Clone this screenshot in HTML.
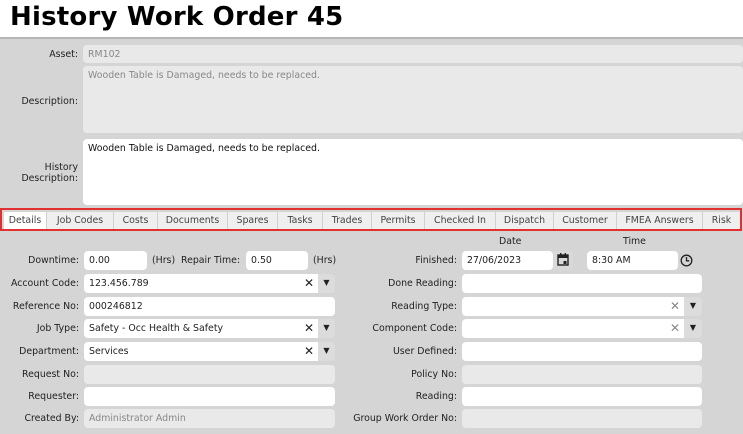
<!DOCTYPE html>
<html><head><meta charset="utf-8"><style>
*{box-sizing:border-box;margin:0;padding:0}
body{width:743px;height:434px;overflow:hidden;background:#d5d5d5;font-family:"DejaVu Sans","Liberation Sans",sans-serif;font-size:9.4px;color:#222;position:relative}
.a{position:absolute}
.hd{left:0;top:0;width:743px;height:39px;background:#fff;border-bottom:2px solid #b5b5b5}
h1{position:absolute;left:10px;top:2px;font-size:26px;font-weight:bold;color:#000;letter-spacing:0.2px}
.l{position:absolute;text-align:right;white-space:nowrap}
.i{position:absolute;height:19px;background:#fff;border-radius:4px;padding:4px 0 0 5px;white-space:nowrap}
.r{background:#e9e9e9;color:#888}
.btn{position:absolute;height:19px;background:#dcdcdc;border-radius:0 4px 4px 0;text-align:center;padding-top:4px;font-size:8px}
.tabs{left:0;top:208px;width:742px;height:23px;border:2px solid #e03030;background:#d5d5d5}
.t{position:absolute;top:2px;height:17px;background:#efefef;border-right:1px solid #d0d0d0;text-align:center;padding-top:3px;color:#444}
.x{position:absolute;font-weight:bold;font-size:12px;top:2px}
</style></head><body>
<div class="a hd"><h1>History Work Order 45</h1></div>

<div class="l" style="right:665px;top:49px">Asset:</div>
<div class="i r" style="left:83px;top:45px;width:660px;height:18px">RM102</div>
<div class="i r" style="left:83px;top:66px;width:660px;height:67px">Wooden Table is Damaged, needs to be replaced.</div>
<div class="l" style="right:665px;top:96px">Description:</div>
<div class="i" style="left:83px;top:139px;width:660px;height:66px;color:#111">Wooden Table is Damaged, needs to be replaced.</div>
<div class="l" style="right:665px;top:162px">History<br>Description:</div>

<div class="a tabs">
<div class="t" style="left:2px;width:43px;background:#fff">Details</div>
<div class="t" style="left:45px;width:67px">Job Codes</div>
<div class="t" style="left:112px;width:44px">Costs</div>
<div class="t" style="left:156px;width:70px">Documents</div>
<div class="t" style="left:226px;width:50px">Spares</div>
<div class="t" style="left:276px;width:45px">Tasks</div>
<div class="t" style="left:321px;width:49px">Trades</div>
<div class="t" style="left:370px;width:53px">Permits</div>
<div class="t" style="left:423px;width:71px">Checked In</div>
<div class="t" style="left:494px;width:58px">Dispatch</div>
<div class="t" style="left:552px;width:63px">Customer</div>
<div class="t" style="left:615px;width:86px">FMEA Answers</div>
<div class="t" style="left:701px;width:37px;border-right:none">Risk</div>
</div>

<div class="l" style="left:499px;top:236px">Date</div>
<div class="l" style="left:623px;top:236px">Time</div>

<div class="l" style="right:664px;top:255px">Downtime:</div>
<div class="i" style="left:84px;top:251px;width:63px">0.00</div>
<div class="l" style="left:152px;top:255px">(Hrs)</div>
<div class="l" style="left:181px;top:255px">Repair Time:</div>
<div class="i" style="left:246px;top:251px;width:62px">0.50</div>
<div class="l" style="left:313px;top:255px">(Hrs)</div>

<div class="l" style="right:664px;top:278px">Account Code:</div>
<div class="i" style="left:84px;top:274px;width:234px;border-radius:4px 0 0 4px">123.456.789<span class="x" style="left:220px">✕</span></div>
<div class="btn" style="left:318px;top:274px;width:17px">▼</div>

<div class="l" style="right:664px;top:301px">Reference No:</div>
<div class="i" style="left:84px;top:297px;width:251px">000246812</div>

<div class="l" style="right:664px;top:323px">Job Type:</div>
<div class="i" style="left:84px;top:319px;width:234px;border-radius:4px 0 0 4px">Safety - Occ Health &amp; Safety<span class="x" style="left:220px">✕</span></div>
<div class="btn" style="left:318px;top:319px;width:17px">▼</div>

<div class="l" style="right:664px;top:346px">Department:</div>
<div class="i" style="left:84px;top:342px;width:234px;border-radius:4px 0 0 4px">Services<span class="x" style="left:220px">✕</span></div>
<div class="btn" style="left:318px;top:342px;width:17px">▼</div>

<div class="l" style="right:664px;top:369px">Request No:</div>
<div class="i r" style="left:84px;top:365px;width:251px"></div>
<div class="l" style="right:664px;top:391px">Requester:</div>
<div class="i" style="left:84px;top:387px;width:251px"></div>
<div class="l" style="right:664px;top:413px">Created By:</div>
<div class="i r" style="left:84px;top:409px;width:251px">Administrator Admin</div>

<div class="l" style="right:286px;top:255px">Finished:</div>
<div class="i" style="left:462px;top:251px;width:91px">27/06/2023</div>
<div class="btn" style="left:553px;top:251px;width:20px;background:#d9d9d9;padding-top:2px">
<svg width="12" height="13" viewBox="0 0 12 13"><rect x="1" y="2" width="10" height="10" fill="none" stroke="#222" stroke-width="1.4"/><rect x="1" y="2" width="10" height="3" fill="#222"/><rect x="3" y="0" width="1.4" height="3" fill="#222"/><rect x="7.6" y="0" width="1.4" height="3" fill="#222"/><rect x="6.5" y="8" width="3" height="3" fill="#222"/></svg></div>
<div class="i" style="left:587px;top:251px;width:91px">8:30 AM</div>
<svg class="a" style="left:680px;top:254px" width="13" height="13" viewBox="0 0 13 13"><circle cx="6.5" cy="6.5" r="5.3" fill="none" stroke="#222" stroke-width="1.3"/><path d="M6.5 3v3.8h2.8" fill="none" stroke="#222" stroke-width="1.3"/></svg>

<div class="l" style="right:286px;top:278px">Done Reading:</div>
<div class="i" style="left:462px;top:274px;width:240px"></div>

<div class="l" style="right:286px;top:301px">Reading Type:</div>
<div class="i" style="left:462px;top:297px;width:222px;border-radius:4px 0 0 4px"><span class="x" style="left:208px;color:#888">✕</span></div>
<div class="btn" style="left:684px;top:297px;width:18px">▼</div>

<div class="l" style="right:286px;top:323px">Component Code:</div>
<div class="i" style="left:462px;top:319px;width:222px;border-radius:4px 0 0 4px"><span class="x" style="left:208px;color:#888">✕</span></div>
<div class="btn" style="left:684px;top:319px;width:18px">▼</div>

<div class="l" style="right:286px;top:346px">User Defined:</div>
<div class="i" style="left:462px;top:342px;width:240px"></div>
<div class="l" style="right:286px;top:369px">Policy No:</div>
<div class="i r" style="left:462px;top:365px;width:240px"></div>
<div class="l" style="right:286px;top:391px">Reading:</div>
<div class="i" style="left:462px;top:387px;width:240px"></div>
<div class="l" style="right:286px;top:413px">Group Work Order No:</div>
<div class="i r" style="left:462px;top:409px;width:240px"></div>
</body></html>
